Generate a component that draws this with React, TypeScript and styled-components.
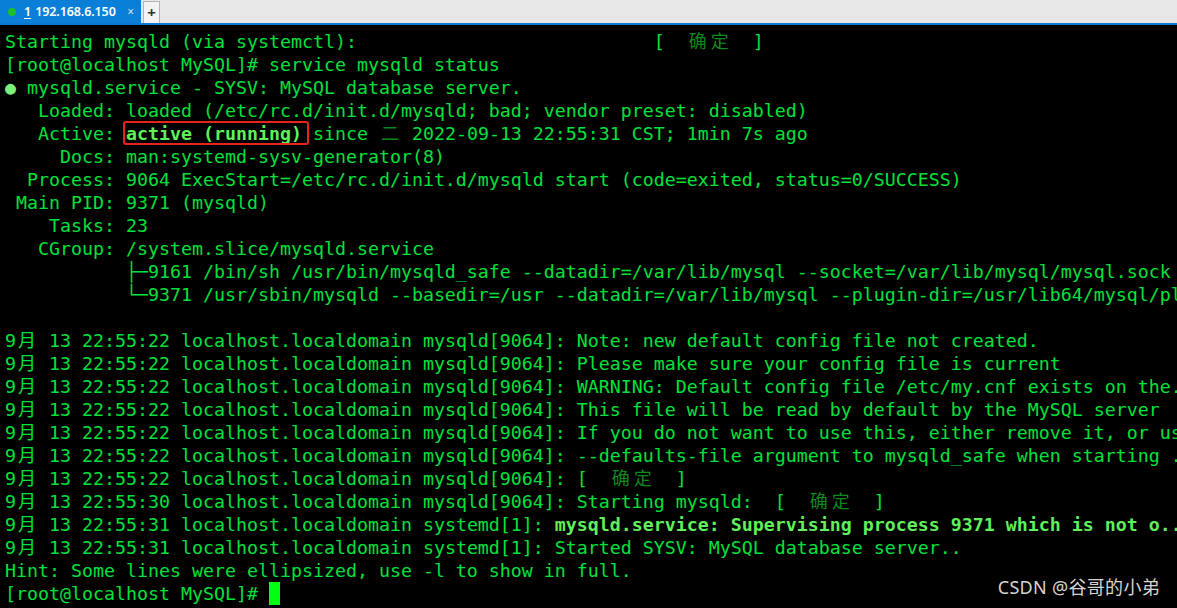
import React from "react";
import styled, { createGlobalStyle, css } from "styled-components";

const GlobalStyle = createGlobalStyle`
  html, body { margin: 0; padding: 0; background: #000; }
  body { overflow: hidden; }
`;

const MONO = `"DejaVu Sans Mono", "Liberation Mono", monospace`;
const CJK = `"Noto Sans CJK SC", "Noto Sans CJK JP", sans-serif`;

const Window = styled.div`
  position: relative;
  display: flex;
  flex-direction: column;
  width: 1177px;
  height: 608px;
  background: #000;
  overflow: hidden;
`;

const TabBar = styled.div`
  display: flex;
  align-items: stretch;
  height: 23px;
  background: #e6e6e6;
  border-bottom: 2px solid #0a78d4;
  font-family: "Noto Sans", "Open Sans", sans-serif;
`;

const Tab = styled.div`
  display: flex;
  align-items: center;
  width: 141px;
  box-sizing: border-box;
  padding-left: 8px;
  background: #0a7fd8;
  color: #fff;
`;

const StatusDot = styled.span`
  width: 8px;
  height: 8px;
  border-radius: 50%;
  background: #1fc12a;
  margin-right: 8px;
`;

const TabNumber = styled.span`
  font-size: 12.5px;
  font-weight: 600;
  text-decoration: underline;
  text-underline-offset: 2px;
  margin-right: 4px;
`;

const TabTitle = styled.span`
  font-size: 12.5px;
  font-weight: 600;
  letter-spacing: -0.1px;
`;

const CloseMark = styled.span`
  margin-left: auto;
  margin-right: 7px;
  font-size: 12px;
  color: #cfe2f5;
`;

const NewTabButton = styled.div`
  display: flex;
  align-items: center;
  justify-content: center;
  width: 17px;
  margin: 1px 0 0 2px;
  box-sizing: border-box;
  background: #f3f3f3;
  border: 1px solid #b4b4b4;
  border-bottom: none;
  color: #333;
  font-size: 15px;
  font-weight: 700;
  line-height: 1;
`;

const Terminal = styled.div`
  flex: 1;
  padding: 5px 0 0 5px;
  font-family: ${MONO};
  font-size: 18.27px;
  line-height: 23px;
  color: #00e13c;
  white-space: pre;
  overflow: hidden;
`;

const Line = styled.div`
  height: 23px;
`;

type Variant = "normal" | "dim" | "bold" | "bullet";

const Seg = styled.span<{ $v: Variant }>`
  ${(p) =>
    p.$v === "dim" &&
    css`
      color: #0b8a1c;
    `}
  ${(p) =>
    p.$v === "bold" &&
    css`
      color: #5ff05a;
      font-weight: 700;
    `}
  ${(p) =>
    p.$v === "bullet" &&
    css`
      color: #7af07a;
    `}
`;

const Wide = styled.span`
  display: inline-block;
  width: 22px;
  text-align: center;
  font-family: ${CJK};
  font-size: 18px;
  line-height: 1;
`;

const Boxed = styled.span`
  position: relative;
  color: #5ff05a;
  font-weight: 700;
  &::after {
    content: "";
    position: absolute;
    top: -2px;
    bottom: -1px;
    left: -3px;
    right: -7px;
    border: 2px solid #e8231c;
    border-radius: 3px;
  }
`;

const Cursor = styled.span`
  display: inline-block;
  width: 11px;
  height: 23px;
  vertical-align: top;
  background: #00ff10;
`;

const Watermark = styled.div`
  position: absolute;
  right: 17px;
  bottom: 9px;
  font-family: "Noto Sans", "Noto Sans CJK SC", sans-serif;
  font-size: 18px;
  color: #d4d4d4;
  letter-spacing: 0.3px;
`;

type S = { t: string; v?: Variant; box?: boolean };

const isCJK = (c: string) => /[\u2E80-\u9FFF\uFF00-\uFFEF]/.test(c);

function renderText(t: string) {
  const out: React.ReactNode[] = [];
  let buf = "";
  let k = 0;
  for (const ch of t) {
    if (isCJK(ch)) {
      if (buf) {
        out.push(buf);
        buf = "";
      }
      out.push(<Wide key={k++}>{ch}</Wide>);
    } else buf += ch;
  }
  if (buf) out.push(buf);
  return out;
}

const P = "9月 13 22:55:22 localhost.localdomain mysqld[9064]: ";

const lines: S[][] = [
  [
    { t: "Starting mysqld (via systemctl):                           [  " },
    { t: "确定", v: "dim" },
    { t: "  ]" },
  ],
  [{ t: "[root@localhost MySQL]# service mysqld status" }],
  [{ t: "●", v: "bullet" }, { t: " mysqld.service - SYSV: MySQL database server." }],
  [{ t: "   Loaded: loaded (/etc/rc.d/init.d/mysqld; bad; vendor preset: disabled)" }],
  [
    { t: "   Active: " },
    { t: "active (running)", box: true },
    { t: " since " },
    { t: "二", v: "dim" },
    { t: " 2022-09-13 22:55:31 CST; 1min 7s ago" },
  ],
  [{ t: "     Docs: man:systemd-sysv-generator(8)" }],
  [{ t: "  Process: 9064 ExecStart=/etc/rc.d/init.d/mysqld start (code=exited, status=0/SUCCESS)" }],
  [{ t: " Main PID: 9371 (mysqld)" }],
  [{ t: "    Tasks: 23" }],
  [{ t: "   CGroup: /system.slice/mysqld.service" }],
  [
    {
      t: "           ├─9161 /bin/sh /usr/bin/mysqld_safe --datadir=/var/lib/mysql --socket=/var/lib/mysql/mysql.sock --pid-file=/var/lib/mysql/localhost.pid",
    },
  ],
  [
    {
      t: "           └─9371 /usr/sbin/mysqld --basedir=/usr --datadir=/var/lib/mysql --plugin-dir=/usr/lib64/mysql/plugin --user=mysql",
    },
  ],
  [{ t: " " }],
  [{ t: P + "Note: new default config file not created." }],
  [{ t: P + "Please make sure your config file is current" }],
  [{ t: P + "WARNING: Default config file /etc/my.cnf exists on the..." }],
  [{ t: P + "This file will be read by default by the MySQL server" }],
  [{ t: P + "If you do not want to use this, either remove it, or us..." }],
  [{ t: P + "--defaults-file argument to mysqld_safe when starting ..." }],
  [{ t: P + "[  " }, { t: "确定", v: "dim" }, { t: "  ]" }],
  [
    { t: "9月 13 22:55:30 localhost.localdomain mysqld[9064]: Starting mysqld:  [  " },
    { t: "确定", v: "dim" },
    { t: "  ]" },
  ],
  [
    { t: "9月 13 22:55:31 localhost.localdomain systemd[1]: " },
    { t: "mysqld.service: Supervising process 9371 which is not o..", v: "bold" },
  ],
  [{ t: "9月 13 22:55:31 localhost.localdomain systemd[1]: Started SYSV: MySQL database server.." }],
  [{ t: "Hint: Some lines were ellipsized, use -l to show in full." }],
];

export default function App() {
  return (
    <>
      <GlobalStyle />
      <Window>
        <TabBar>
          <Tab>
            <StatusDot />
            <TabNumber>1</TabNumber>
            <TabTitle>192.168.6.150</TabTitle>
            <CloseMark>×</CloseMark>
          </Tab>
          <NewTabButton>+</NewTabButton>
        </TabBar>
        <Terminal>
          {lines.map((segs, i) => (
            <Line key={i}>
              {segs.map((s, j) =>
                s.box ? (
                  <Boxed key={j}>{renderText(s.t)}</Boxed>
                ) : (
                  <Seg key={j} $v={s.v ?? "normal"}>
                    {renderText(s.t)}
                  </Seg>
                )
              )}
            </Line>
          ))}
          <Line>
            {"[root@localhost MySQL]# "}
            <Cursor />
          </Line>
        </Terminal>
        <Watermark>CSDN @谷哥的小弟</Watermark>
      </Window>
    </>
  );
}
